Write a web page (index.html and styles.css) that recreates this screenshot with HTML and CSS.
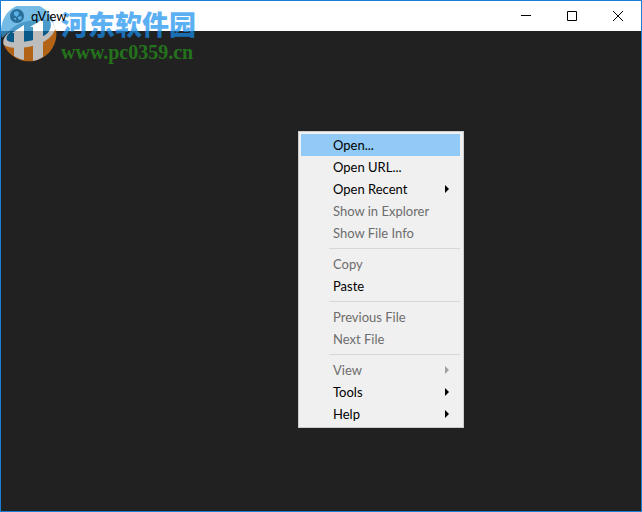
FILE: index.html
```html
<!DOCTYPE html>
<html lang="en">
<head>
    <meta charset="utf-8">
    <title>qView</title>
    <link rel="stylesheet" href="styles.css">
</head>
<body>
    <div class="window">
        <header class="titlebar">
            <svg class="app-icon" viewBox="0 0 14 14">
                <circle cx="7" cy="7" r="7" fill="#000"/>
                <path fill="#a8dcff" d="M4 3l4-1 1 3-2 3-3-2zM8 8l3-1 1 2-2 2-2-1zM4 9l2 0 0 2-2-1z"/>
            </svg>
            <h1 class="title">qView</h1>
            <div class="window-buttons">
                <button type="button" aria-label="Minimize">
                    <svg viewBox="0 0 10 10"><path d="M0 4.5h10"/></svg>
                </button>
                <button type="button" aria-label="Maximize">
                    <svg viewBox="0 0 10 10"><path d="M.5.5h9v9h-9z"/></svg>
                </button>
                <button type="button" aria-label="Close">
                    <svg viewBox="0 0 10 10"><path d="M0 0l10 10M10 0L0 10"/></svg>
                </button>
            </div>
        </header>

        <main class="viewer"></main>

        <!-- Site badge over the top left corner -->
        <div class="watermark">
            <svg class="watermark-logo" viewBox="0 0 56 56">
                <path fill="#3a9fdc" d="M1 32A27 27 0 0 1 53 17C43 10 17 16 1 32z"/>
                <path fill="#0071b4" d="M5 33C5 22 24 11 48 14C53 16 54 21 53 25C46 34 27 39 12 37C7 37 5 36 5 33z"/>
                <path fill="#f08010" d="M55 23A27.5 27.5 0 0 1 2 37C20 44 44 37 55 23z"/>
                <path fill="#fff" d="M11 27L23 19V54Q18 53 13 50V27zM29 21L42 13V51Q37 54 32 55V21z"/>
                <path fill="#fff" d="M10 25C4 31 4 35 10 36C20 37 31 35 38 32C47 29 52 23 49 14C57 21 54 29 44 35C30 43 10 44 3 39C1 35 3 30 10 25z"/>
            </svg>
            <div class="watermark-text">
                <span class="site-name" lang="zh-CN">河东软件园</span>
                <span class="site-url">www.pc0359.cn</span>
            </div>
        </div>

        <!-- Context menu -->
        <div class="menu" role="menu">
            <button type="button" role="menuitem" class="item selected">Open...</button>
            <button type="button" role="menuitem" class="item">Open URL...</button>
            <button type="button" role="menuitem" class="item submenu">Open Recent</button>
            <button type="button" role="menuitem" class="item" disabled>Show in Explorer</button>
            <button type="button" role="menuitem" class="item" disabled>Show File Info</button>
            <hr>
            <button type="button" role="menuitem" class="item" disabled>Copy</button>
            <button type="button" role="menuitem" class="item">Paste</button>
            <hr>
            <button type="button" role="menuitem" class="item" disabled>Previous File</button>
            <button type="button" role="menuitem" class="item" disabled>Next File</button>
            <hr>
            <button type="button" role="menuitem" class="item submenu" disabled>View</button>
            <button type="button" role="menuitem" class="item submenu">Tools</button>
            <button type="button" role="menuitem" class="item submenu">Help</button>
        </div>
    </div>
</body>
</html>
```
FILE: styles.css
```css
* {
    box-sizing: border-box;
}

body {
    margin: 0;
    font-family: Lato, "Noto Sans", sans-serif;
    font-size: 13px;
    color: #000;
}

.window {
    position: relative;
    display: flex;
    flex-direction: column;
    height: 100vh;
    border: 1px solid #1a7fd4;
    background-color: #212121;
    overflow: hidden;
}

/* Title bar */
.titlebar {
    display: flex;
    align-items: center;
    height: 30px;
    padding-left: 9px;
    background-color: #fff;
}

.app-icon {
    width: 14px;
    height: 14px;
}

.title {
    flex: 1;
    margin: 0 0 0 7px;
    font-size: 13px;
    font-weight: normal;
    z-index: 1;
}

.window-buttons {
    display: flex;
}

.window-buttons button {
    display: flex;
    align-items: center;
    justify-content: center;
    width: 46px;
    height: 29px;
    padding: 0;
    border: none;
    background: none;
}

.window-buttons svg {
    width: 10px;
    height: 10px;
    fill: none;
    stroke: #000;
}

.viewer {
    flex: 1;
}

/* Watermark */
.watermark {
    position: absolute;
    top: 5px;
    left: 0;
    display: flex;
    gap: 4px;
    opacity: 0.7;
    pointer-events: none;
}

.watermark-logo {
    width: 56px;
    height: 56px;
}

.watermark-text {
    display: flex;
    flex-direction: column;
    padding-top: 2px;
}

.site-name {
    font-family: "Noto Sans CJK SC", sans-serif;
    font-size: 27px;
    font-weight: 900;
    line-height: 32px;
    color: #1690ee;
}

.site-url {
    font-family: "Liberation Serif", serif;
    font-size: 20px;
    font-weight: bold;
    line-height: 24px;
    color: #26961a;
}

/* Context menu */
.menu {
    position: absolute;
    top: 130px;
    left: 297px;
    width: 166px;
    padding: 2px 3px 2px 2px;
    border: 1px solid #ccc;
    background-color: #f0f0f0;
}

.item {
    display: flex;
    align-items: center;
    justify-content: space-between;
    width: 100%;
    height: 22px;
    padding: 0 11px 0 32px;
    border: none;
    background: none;
    color: #000;
    font: inherit;
    text-align: left;
}

.item.selected,
.item:enabled:hover {
    background-color: #91c9f7;
}

.item:disabled {
    color: #6d6d6d;
}

.submenu::after {
    content: "";
    border: 4px solid transparent;
    border-left-color: #000;
    border-right: none;
}

.submenu:disabled::after {
    border-left-color: #a0a0a0;
}

.menu hr {
    height: 1px;
    margin: 4px 0 4px 28px;
    border: none;
    background-color: #d7d7d7;
}
```
